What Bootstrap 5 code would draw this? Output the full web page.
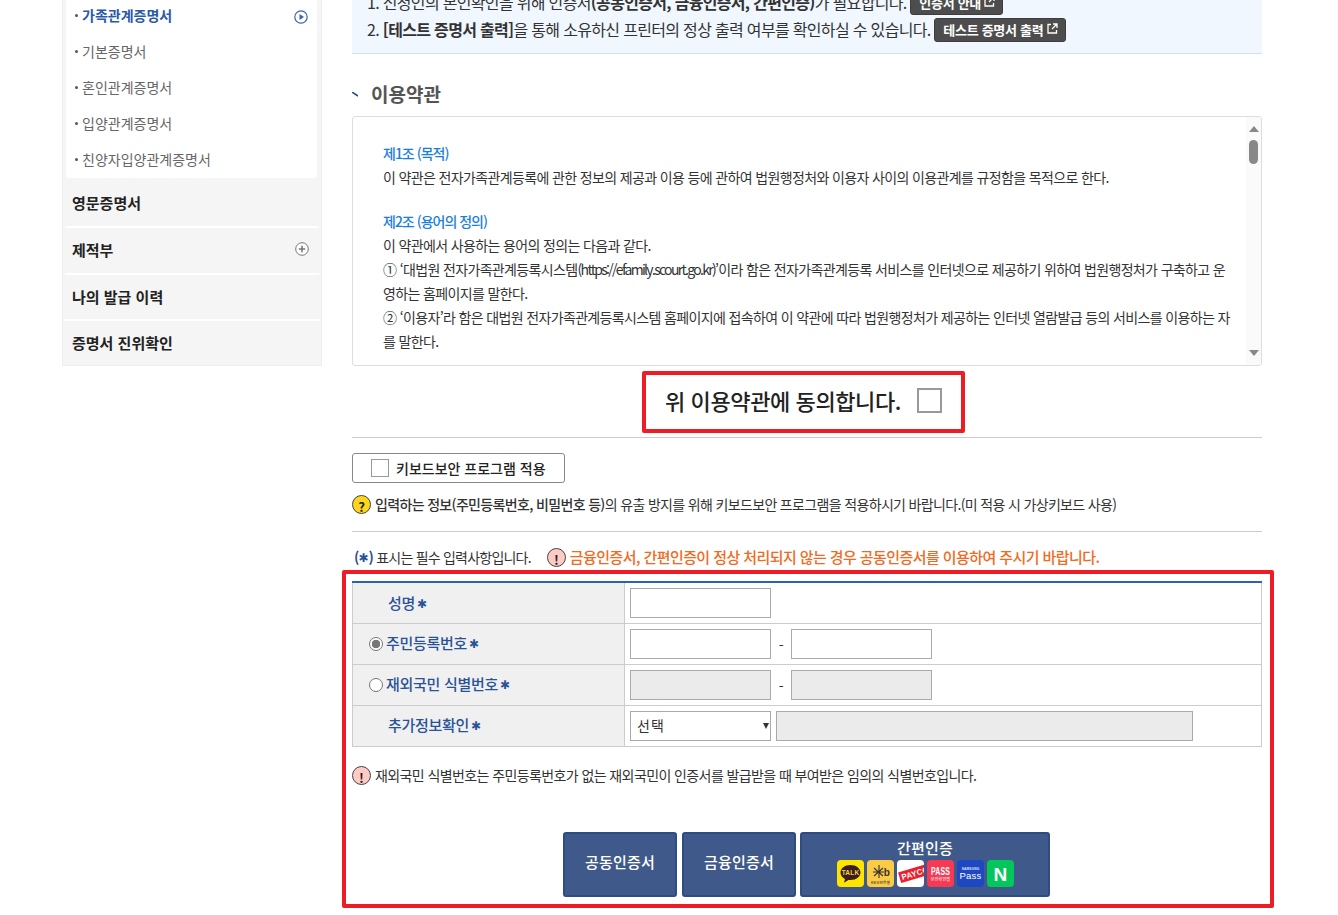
<!DOCTYPE html>
<html lang="ko">
<head>
    <meta charset="UTF-8">
    <meta name="viewport" content="width=device-width, initial-scale=1.0">
    <title>전자가족관계등록시스템</title>
    <link href="https://cdn.jsdelivr.net/npm/bootstrap@5.3.1/dist/css/bootstrap.min.css" rel="stylesheet">
    <style>
        html, body { height: 915px; overflow: hidden; }
        body {
            background: #fff;
            font-family: "Noto Sans CJK KR", "Noto Sans", sans-serif;
            font-size: 14px;
            color: #333;
            letter-spacing: -0.6px;
        }
        .page { margin-top: -20px; padding-left: 62px; gap: 30px; }

        /* left menu */
        .side { width: 260px; flex: none; background: #f5f5f5; border: 1px solid #eee; border-top: 0; height: 386px; padding-top: 18px; letter-spacing: 0; }
        .sub { margin: 0 4px 0 3px; background: #fff; border-radius: 0 0 3px 3px; }
        .sub a { height: 36px; padding: 0 8px 2px 9px; color: #666; font-size: 14px; text-decoration: none; }
        .sub a::before { content: ""; width: 3px; height: 3px; border-radius: 50%; background: #555; margin-right: 4px; }
        .sub a.on { color: #2a5aa8; font-weight: 700; }
        .sub a svg { margin: 3px 1px 0 0; }
        .side-item { height: 46px; padding: 0 10px 0 7px; color: #222; font-size: 15px; font-weight: 700; text-decoration: none; border-bottom: 2px solid #fff; margin: 0 2px; }
        .side-item:nth-of-type(1) { height: 50px; padding-top: 3px; }
        .side-item:nth-of-type(2) { height: 47px; }
        .side-item:nth-of-type(2) svg { margin-bottom: 3px; }
        .side-item:last-child { height: 45px; border-bottom: 0; }

        /* notice */
        .main { width: 910px; flex: none; }
        .notice { background: #f0f7ff; border-bottom: 1px solid #d5e0f0; height: 74px; padding: 9px 15px 0; font-size: 16px; line-height: 27px; letter-spacing: -0.68px; color: #333; }
        .notice > div { height: 27px; white-space: nowrap; }
        .btn-go { background: #4d4d4d; color: #fff; border: 1px solid #3d3d3d; border-radius: 3px; font-size: 13px; font-weight: 700; padding: 0 7px 0 8px; height: 24px; line-height: 22px; display: inline-block; letter-spacing: -0.3px; text-decoration: none; vertical-align: 1px; }
        .btn-go svg { vertical-align: 1px; }
        .tit { font-size: 19px; font-weight: 700; color: #555; margin: 26px 0 8px; height: 28px; line-height: 28px; letter-spacing: 0; }
        .tit svg { margin-right: 13px; }

        /* terms */
        .terms { height: 250px; border: 1px solid #ddd; border-radius: 3px; padding: 24px 28px 0 30px; line-height: 24px; font-size: 14px; overflow: hidden; word-break: break-all; letter-spacing: -0.64px; position: relative; color: #333; }
        .terms h6 { color: #1a7ee0; font-size: 14px; font-weight: 500; line-height: 24px; margin: 0; letter-spacing: -1px; }
        .terms p { margin: 0 0 20px; }
        .terms .url { letter-spacing: -1.7px; }
        .bar { position: absolute; top: 0; right: 0; bottom: 0; width: 15px; background: #fafafa; }
        .bar i { position: absolute; left: 3px; width: 0; height: 0; border-left: 5px solid transparent; border-right: 5px solid transparent; }
        .bar .up { top: 9px; border-bottom: 6px solid #888; }
        .bar .dn { bottom: 9px; border-top: 6px solid #888; }
        .bar b { position: absolute; left: 3px; top: 23px; width: 9px; height: 24px; border-radius: 5px; background: #888; }

        /* agree */
        .agree { width: 323px; height: 62px; margin: 5px 0 0 290px; padding-bottom: 4px; border: 4px solid #ee1c25; border-radius: 2px; font-size: 22px; font-weight: 500; color: #222; letter-spacing: -0.4px; }
        .agree input { appearance: none; width: 25px; height: 25px; border: 2px solid #999; margin-left: 16px; background: #fff; }
        .line { border-top: 1px solid #ccc; opacity: 1; margin: 0; }
        .kbd-btn { width: 213px; height: 30px; border: 1px solid #888; border-radius: 3px; padding-left: 18px; font-size: 14px; font-weight: 500; color: #222; margin: 15px 0 10px; background: #fff; letter-spacing: 0; }
        .kbd-btn input { appearance: none; width: 18px; height: 18px; border: 1px solid #999; margin-right: 7px; background: #fff; }
        .help { height: 22px; font-size: 14px; color: #333; margin-bottom: 16px; letter-spacing: -0.66px; }
        .mark { width: 19px; height: 19px; border-radius: 50%; border: 1px solid #444; font-size: 13px; font-weight: 700; line-height: 17px; text-align: center; flex: none; margin-right: 4px; color: #222; letter-spacing: 0; }
        .mark.q { background: #ffd41d; }
        .mark.w { background: #ffc9c4; }
        .req { height: 22px; margin-top: 14px; padding-left: 2px; font-size: 14px; letter-spacing: -0.78px; color: #333; }
        .req .blue { color: #2a5298; font-weight: 700; }
        .req .warn { color: #f26a21; font-size: 15px; font-weight: 500; letter-spacing: -0.58px; }
        .ast { font-family: "DejaVu Sans", sans-serif; color: #2a5298; font-size: 12px; font-weight: 400; letter-spacing: 0; vertical-align: 1px; }

        /* form */
        .redbox { width: 932px; height: 338px; margin: 2px 0 0 -10px; border: 4px solid #ee1c25; border-radius: 2px; padding: 7px 8px 0 6px; }
        .form-tb { margin: 0; width: 910px; border-top: 2px solid #2f62ad; table-layout: fixed; --bs-table-border-color: #ccc; }
        .form-tb th, .form-tb td { height: 41px; padding: 0; border: 1px solid #ccc; vertical-align: middle; }
        .form-tb th { width: 272px; background: #f0f0f0; color: #2a5298; font-size: 15px; font-weight: 500; letter-spacing: -0.3px; }
        .form-tb th.pl { padding-left: 35px; }
        .form-tb th.pr { padding-left: 16px; }
        .form-tb td { padding-left: 5px; }
        .form-tb .ast { margin-left: 2px; }
        .rd { appearance: none; width: 14px; height: 14px; border: 1px solid #777; border-radius: 50%; background: #fff; margin-right: 3px; vertical-align: -2px; }
        .rd:checked { background: radial-gradient(circle, #777 0 4px, #fff 4.5px); }
        .ipt { width: 141px; height: 30px; border: 1px solid #aaa; border-radius: 0; padding: 0 6px; font-size: 14px; box-shadow: none; }
        .ipt:disabled { background: #ebebeb; opacity: 1; border-color: #aaa; }
        .ipt-wide { width: 417px; margin-left: 5px; }
        .dash { width: 20px; text-align: center; color: #333; padding-top: 3px; }
        .sel { width: 141px; height: 30px; border: 1px solid #aaa; border-radius: 0; padding: 0 6px; font-size: 14px; letter-spacing: 1px; color: #333; }
        .sel.form-select { background-image: none; }
        .sel-wrap { position: relative; }
        .sel-wrap::after { content: ""; position: absolute; right: 2px; top: 12px; border-left: 3px solid transparent; border-right: 3px solid transparent; border-top: 6px solid #333; }
        .note { height: 22px; margin-top: 18px; font-size: 14px; letter-spacing: -0.6px; color: #333; }
        .acts { margin-top: 45px; gap: 5px; padding-left: 211px; }
        .btn-cert { height: 65px; background: #3f5a8a; border: 2px solid #2f4c82; border-radius: 3px; color: #fff; font-size: 15px; font-weight: 500; letter-spacing: 0.2px; padding: 0 0 3px; }
        .btn-cert:hover { background: #3f5a8a; color: #fff; }
        .w-a { width: 114px; }
        .w-b { width: 250px; margin-left: -1px; line-height: 20px; padding-bottom: 4px; }
        .logos { gap: 3px; margin-top: 2px; }
        .logos svg { display: block; border-radius: 4px; }
    </style>
</head>
<body>
<div class="page d-flex align-items-start">
    <!-- left menu -->
    <div class="side">
        <div class="sub">
            <a class="on d-flex align-items-center" href="#">가족관계증명서
                <svg class="ms-auto" width="14" height="14" viewBox="0 0 14 14"><circle cx="7" cy="7" r="6.2" fill="#fff" stroke="#3f62a8" stroke-width="1.2"/><path d="M5.5 4 L10 7 L5.5 10 Z" fill="#3f62a8"/></svg></a>
            <a class="d-flex align-items-center" href="#">기본증명서</a>
            <a class="d-flex align-items-center" href="#">혼인관계증명서</a>
            <a class="d-flex align-items-center" href="#">입양관계증명서</a>
            <a class="d-flex align-items-center" href="#">친양자입양관계증명서</a>
        </div>
        <a class="side-item d-flex align-items-center" href="#">영문증명서</a>
        <a class="side-item d-flex align-items-center" href="#">제적부
            <svg class="ms-auto" width="14" height="14" viewBox="0 0 14 14"><circle cx="7" cy="7" r="6.3" fill="#fff" stroke="#777"/><path d="M7 3.8v6.4M3.8 7h6.4" stroke="#777" stroke-width="1.6"/></svg></a>
        <a class="side-item d-flex align-items-center" href="#">나의 발급 이력</a>
        <a class="side-item d-flex align-items-center" href="#">증명서 진위확인</a>
    </div>

    <!-- main -->
    <div class="main">
        <div class="notice">
            <div>1. 신청인의 본인확인을 위해 인증서<strong>(공동인증서, 금융인증서, 간편인증)</strong>가 필요합니다. <a class="btn-go" href="#">인증서 안내 <svg width="11" height="11" viewBox="0 0 11 11"><path d="M4 1.5H1v8.5h8.5V7M6 1h4v4M10 1 5 6" fill="none" stroke="#fff" stroke-width="1.3"/></svg></a></div>
            <div>2. <strong>[테스트 증명서 출력]</strong>을 통해 소유하신 프린터의 정상 출력 여부를 확인하실 수 있습니다. <a class="btn-go" href="#">테스트 증명서 출력 <svg width="11" height="11" viewBox="0 0 11 11"><path d="M4 1.5H1v8.5h8.5V7M6 1h4v4M10 1 5 6" fill="none" stroke="#fff" stroke-width="1.3"/></svg></a></div>
        </div>

        <div class="tit d-flex align-items-center"><svg width="6" height="5" viewBox="0 0 6 5"><path d="M0 0 L6 4" stroke="#2f4c82" stroke-width="1.6"/></svg>이용약관</div>
        <div class="terms">
            <h6>제1조 (목적)</h6>
            <p>이 약관은 전자가족관계등록에 관한 정보의 제공과 이용 등에 관하여 법원행정처와 이용자 사이의 이용관계를 규정함을 목적으로 한다.</p>
            <h6>제2조 (용어의 정의)</h6>
            <div>이 약관에서 사용하는 용어의 정의는 다음과 같다.</div>
            <div>① ‘대법원 전자가족관계등록시스템<span class="url">(https://efamily.scourt.go.kr)</span>’이라 함은 전자가족관계등록 서비스를 인터넷으로 제공하기 위하여 법원행정처가 구축하고 운영하는 홈페이지를 말한다.</div>
            <div>② ‘이용자’라 함은 대법원 전자가족관계등록시스템 홈페이지에 접속하여 이 약관에 따라 법원행정처가 제공하는 인터넷 열람발급 등의 서비스를 이용하는 자를 말한다.</div>
            <div class="bar"><i class="up"></i><b></b><i class="dn"></i></div>
        </div>

        <div class="agree d-flex align-items-center justify-content-center">위 이용약관에 동의합니다.<input type="checkbox" aria-label="동의"></div>
        <hr class="line mt-1">

        <label class="kbd-btn d-flex align-items-center"><input type="checkbox">키보드보안 프로그램 적용</label>
        <div class="help d-flex align-items-center"><span class="mark q">?</span><span><strong class="fw-medium">입력하는 정보(주민등록번호, 비밀번호 등)</strong>의 유출 방지를 위해 키보드보안 프로그램을 적용하시기 바랍니다.(미 적용 시 가상키보드 사용)</span></div>
        <hr class="line">

        <div class="req d-flex align-items-center">
            <span><span class="blue">(<span class="ast">✱</span>)</span> 표시는 필수 입력사항입니다.</span>
            <span class="mark w ms-3">!</span><span class="warn">금융인증서, 간편인증이 정상 처리되지 않는 경우 공동인증서를 이용하여 주시기 바랍니다.</span>
        </div>

        <div class="redbox">
            <table class="table form-tb">
                <tr>
                    <th class="pl">성명<span class="ast">✱</span></th>
                    <td><input class="form-control ipt" type="text" aria-label="성명"></td>
                </tr>
                <tr>
                    <th class="pr"><input class="rd" type="radio" name="idType" checked>주민등록번호<span class="ast">✱</span></th>
                    <td><div class="d-flex align-items-center"><input class="form-control ipt" type="text"><span class="dash">-</span><input class="form-control ipt" type="text"></div></td>
                </tr>
                <tr>
                    <th class="pr"><input class="rd" type="radio" name="idType">재외국민 식별번호<span class="ast">✱</span></th>
                    <td><div class="d-flex align-items-center"><input class="form-control ipt" type="text" disabled><span class="dash">-</span><input class="form-control ipt" type="text" disabled></div></td>
                </tr>
                <tr>
                    <th class="pl">추가정보확인<span class="ast">✱</span></th>
                    <td><div class="d-flex align-items-center"><div class="sel-wrap"><select class="form-select sel"><option>선택</option></select></div><input class="form-control ipt ipt-wide" type="text" disabled></div></td>
                </tr>
            </table>
            <div class="note d-flex align-items-center"><span class="mark w">!</span>재외국민 식별번호는 주민등록번호가 없는 재외국민이 인증서를 발급받을 때 부여받은 임의의 식별번호입니다.</div>
            <div class="acts d-flex">
                <button class="btn btn-cert w-a" type="button">공동인증서</button>
                <button class="btn btn-cert w-a" type="button">금융인증서</button>
                <button class="btn btn-cert w-b" type="button">간편인증
                    <span class="logos d-flex justify-content-center">
                        <svg width="27" height="27" viewBox="0 0 27 27"><rect width="27" height="27" fill="#fee500"/><path d="M13.5 5C7.7 5 3.5 8.4 3.5 12.6c0 2.7 1.8 5 4.5 6.4l-1 3.8 4.4-2.9c.7.1 1.4.2 2.1.2 5.8 0 10-3.4 10-7.5S19.3 5 13.5 5Z" fill="#3c1e1e"/><text x="13.5" y="15.2" font-size="6.5" font-weight="700" fill="#f5d24a" text-anchor="middle" font-family="Liberation Sans, sans-serif">TALK</text></svg>
                        <svg width="27" height="27" viewBox="0 0 27 27"><rect width="27" height="27" fill="#fccb45"/><path d="M12 5v13M7 8l9 8M16 8l-9 8M6 12h11" stroke="#333" stroke-width="1.1" fill="none"/><text x="20" y="16" font-size="10" font-weight="700" fill="#333" text-anchor="middle" font-family="Liberation Sans, sans-serif">b</text><text x="13.5" y="24" font-size="3.6" fill="#333" text-anchor="middle">KB국민은행</text></svg>
                        <svg width="27" height="27" viewBox="0 0 27 27"><rect width="27" height="27" fill="#fff"/><g transform="rotate(-17 13.5 14)"><rect x="2" y="9" width="36" height="11" fill="#e8222d"/><text x="4" y="17.5" font-size="8" font-weight="700" fill="#fff" font-family="Liberation Sans, sans-serif">PAYCO</text></g></svg>
                        <svg width="27" height="27" viewBox="0 0 27 27"><rect width="27" height="27" fill="#f73a54"/><text x="13.5" y="15" font-size="10" font-weight="700" fill="#fff" text-anchor="middle" textLength="19" lengthAdjust="spacingAndGlyphs" font-family="Liberation Sans, sans-serif">PASS</text><text x="13.5" y="21" font-size="4" fill="#ffe3e6" text-anchor="middle">본인확인앱</text></svg>
                        <svg width="27" height="27" viewBox="0 0 27 27"><rect width="27" height="27" fill="#1f47c4"/><text x="13.5" y="10" font-size="3.2" font-weight="700" fill="#dfe7ff" text-anchor="middle" font-family="Liberation Sans, sans-serif">SAMSUNG</text><text x="13.5" y="19" font-size="9.5" fill="#fff" text-anchor="middle" font-family="Liberation Sans, sans-serif">Pass</text></svg>
                        <svg width="27" height="27" viewBox="0 0 27 27"><rect width="27" height="27" fill="#03c75a"/><text x="13.5" y="20.5" font-size="19" font-weight="700" fill="#fff" text-anchor="middle" font-family="Liberation Sans, sans-serif">N</text></svg>
                    </span>
                </button>
            </div>
        </div>
    </div>
</div>
<script src="https://cdn.jsdelivr.net/npm/bootstrap@5.3.1/dist/js/bootstrap.bundle.min.js"></script>
</body>
</html>
